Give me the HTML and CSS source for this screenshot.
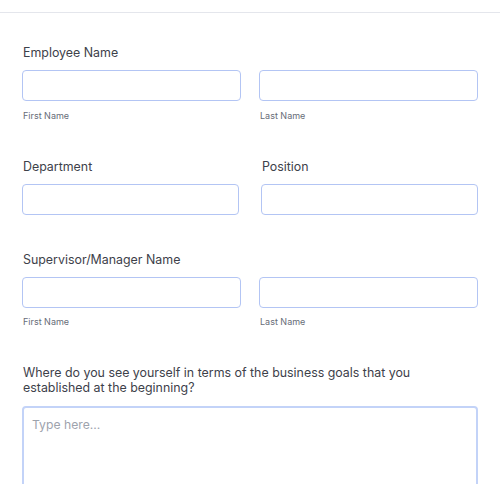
FILE: index.html
```html
<!DOCTYPE html>
<html>
<head>
<meta charset="utf-8">
<link rel="stylesheet" href="styles.css">
</head>
<body>
<div class="topbar"></div>
<form class="form">
  <div class="field">
    <div class="label">Employee Name</div>
    <div class="row">
      <div class="col">
        <input class="input" type="text">
        <div class="sub">First Name</div>
      </div>
      <div class="col">
        <input class="input" type="text">
        <div class="sub">Last Name</div>
      </div>
    </div>
  </div>
  <div class="row wide">
    <div class="field">
      <div class="label">Department</div>
      <input class="input" type="text">
    </div>
    <div class="field">
      <div class="label">Position</div>
      <input class="input" type="text">
    </div>
  </div>
  <div class="field">
    <div class="label">Supervisor/Manager Name</div>
    <div class="row">
      <div class="col">
        <input class="input" type="text">
        <div class="sub">First Name</div>
      </div>
      <div class="col">
        <input class="input" type="text">
        <div class="sub">Last Name</div>
      </div>
    </div>
  </div>
  <div class="field">
    <div class="label q">Where do you see yourself in terms of the business goals that you established at the beginning?</div>
    <textarea class="textarea" placeholder="Type here..."></textarea>
  </div>
</form>
</body>
</html>
```
FILE: styles.css
```css
html, body {
  margin: 0;
  padding: 0;
  background: #ffffff;
  overflow: hidden;
}
body {
  font-family: Inter, "Liberation Sans", sans-serif;
  color: #3d414a;
}
.topbar {
  height: 12px;
  border-bottom: 1px solid #e4e6ec;
}
.form {
  padding: 0 22px;
  display: flex;
  flex-direction: column;
}
.field {
  margin-top: 32px;
  display: flex;
  flex-direction: column;
}
.field + .field,
.row.wide,
.row.wide + .field {
  margin-top: 37px;
}
.row.wide .field {
  margin-top: 0;
}
.label {
  font-size: 12.4px;
  line-height: 15px;
  padding-left: 1px;
  margin-bottom: 10px;
  color: #3d414a;
}
.label.q {
  margin-bottom: 11px;
}
.row {
  display: grid;
  grid-template-columns: 1fr 1fr;
  column-gap: 18px;
}
.row.wide {
  column-gap: 22px;
}
.col {
  display: flex;
  flex-direction: column;
}
.input {
  box-sizing: border-box;
  width: 100%;
  height: 31px;
  margin: 0;
  border: 1px solid #b3c5f4;
  border-radius: 4px;
  background: #ffffff;
  outline: none;
}
.sub {
  font-size: 9px;
  line-height: 13px;
  margin-top: 7.5px;
  padding-left: 1px;
  color: #676d78;
}
.textarea {
  box-sizing: border-box;
  width: 100%;
  height: 120px;
  margin: 0;
  padding: 9px 8px;
  border: 2px solid #c3d3f8;
  border-radius: 4px;
  font-family: Inter, "Liberation Sans", sans-serif;
  font-size: 12.2px;
  line-height: 16px;
  resize: none;
  outline: none;
}
.textarea::placeholder {
  color: #9ea3ad;
}
```
